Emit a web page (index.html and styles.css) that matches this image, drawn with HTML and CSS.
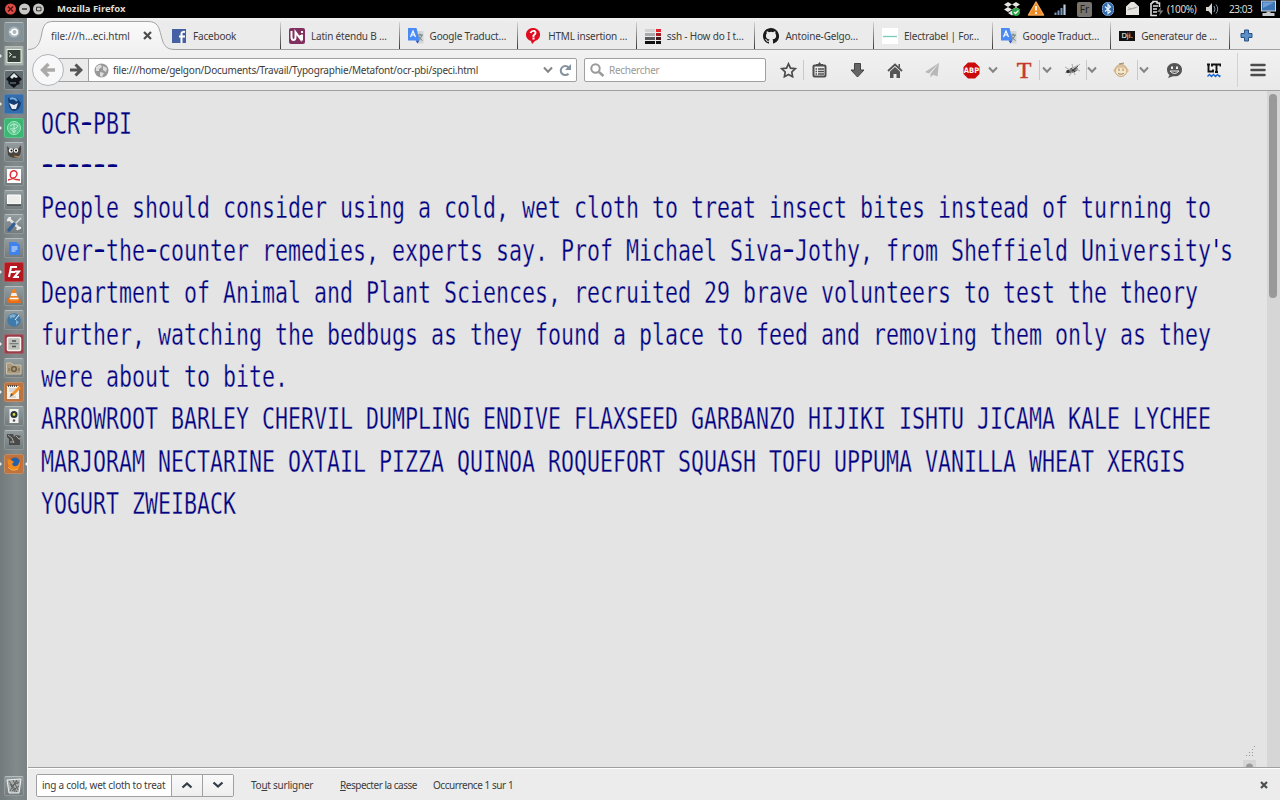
FILE: index.html
```html
<!DOCTYPE html>
<html lang="fr">
<head>
<meta charset="utf-8">
<title>Mozilla Firefox</title>
<link rel="stylesheet" href="styles.css">
</head>
<body>
<svg width="0" height="0" class="defs">
  <defs>
    <linearGradient id="tabfill" x1="0" y1="0" x2="0" y2="1"><stop offset="0" stop-color="#fbfbfb"/><stop offset="1" stop-color="#f1f1f1"/></linearGradient>
    <symbol id="chev" viewBox="0 0 10 8"><path d="M1 1.500 5 5.700 9 1.500" fill="none" stroke="#858585" stroke-width="2"/></symbol>
    <symbol id="translate" viewBox="0 0 16 16"><path d="M6 3h9.500v12.500H9z" fill="#d5d5d5"/><path d="M9 7h6M12 5.500v2M14 7q-1 4-4 5M10.500 8q1 3 4 4.500" stroke="#6f8080" fill="none"/><path d="M0 0h8.500l3 12.500H0z" fill="#4a8af4"/><path d="M7.500 12.500h4L9.500 15.500z" fill="#2a56c6"/><path d="M2.500 9 5 3l2.500 6M3.500 7h3" stroke="#fff" fill="none" stroke-width="1.200"/></symbol>
  </defs>
</svg>

<header class="panel">
  <div class="wm">
    <svg width="46" height="18" viewBox="0 0 46 18"><circle cx="10.500" cy="9" r="5.500" fill="#df4a44"/><path d="m8 6.500 5 5m0-5-5 5" stroke="#4b1110" stroke-width="1.300"/><circle cx="24.500" cy="9" r="5.500" fill="#c9c8c5"/><path d="M22 9h5" stroke="#333" stroke-width="1.500"/><circle cx="38.500" cy="9" r="5.500" fill="#c9c8c5"/><path d="M36.500 7.200h4.500v3.600h-4.500z" stroke="#333" fill="none"/></svg>
    <b class="wm-title">Mozilla Firefox</b>
  </div>
  <div class="tray">
    <svg width="18" height="18" viewBox="0 0 18 18"><path d="m5 2 4 2.500L5 7 1 4.500zM13 2l4 2.500L13 7 9 4.500zM5 7l4 2.500L5 12 1 9.500zM13 7l4 2.500-4 2.500-4-2.500zM5 13l4-2.500 4 2.500-4 2.500z" fill="#e5e5e3"/><circle cx="13" cy="12" r="4" fill="#22a744"/><path d="m11 12 1.500 1.500 3-3" stroke="#fff" fill="none" stroke-width="1.300"/></svg>
    <svg class="t-warn" width="18" height="18" viewBox="0 0 18 18"><path d="M9 2 16.500 15h-15z" fill="#f08a24" stroke="#f6a653" stroke-width="1.500" stroke-linejoin="round"/><path d="M9 6v4.500M9 12v2" stroke="#fff" stroke-width="1.800"/></svg>
    <svg class="t-net" width="14" height="18" viewBox="0 0 14 18"><path d="M1.500 15v-2.500M4.500 15v-4.500M7.500 15V8" stroke="#7895bb" stroke-width="2"/><path d="M10.500 15V4.500" stroke="#b9cce3" stroke-width="2.200"/></svg>
    <span class="kbd">Fr</span>
    <svg class="t-bt" width="12" height="18" viewBox="0 0 12 18"><rect x=".5" y="2.500" width="11" height="13" rx="5" fill="#2f68aa" stroke="#7aa3d2"/><path d="m3 6.500 5.500 5L6 13.500v-9L8.500 7 3 11.500" fill="none" stroke="#e7f1fb" stroke-width="1.200"/></svg>
    <svg class="t-mail" width="15" height="18" viewBox="0 0 15 18"><path d="M1 6.500 6 2h3l5 4.500V15H1z" fill="#e6e5e1"/><path d="m2.500 10 10-3M3 7.500 6 9l5-1.500" fill="none" stroke="#aaa"/></svg>
    <svg class="t-bat" width="15" height="18" viewBox="0 0 15 18"><path d="M4 3V1.500h4V3h2.500v4M2 3h2M2 3v12.500h6" fill="none" stroke="#ddd" stroke-width="1.600"/><path d="M4 6h5M4 9h4M4 12h4" stroke="#ddd" stroke-width="1.700"/><path d="m12 7-4 5h3l-1 4 4.500-5.500h-3z" fill="#777"/></svg>
    <span class="bat-label">(100%)</span>
    <svg class="t-vol" width="15" height="18" viewBox="0 0 15 18"><path d="M1 7h2.500L7 3v12l-3.500-4H1z" fill="#d6d5d1"/><path d="M9 6q2 3 0 6M11 4.500q3.500 4.500 0 9" stroke="#8298a5" fill="none"/></svg>
    <span class="clock">23:03</span>
    <svg class="t-pc" width="17" height="18" viewBox="0 0 17 18"><rect x="1.500" y="1" width="14" height="10" fill="#3f74b4" stroke="#cfd6dc"/><path d="M3 2.500h11L3 8z" fill="#6d9fd6"/><path d="M6.500 11.500h4V13h4v3H2.500v-3h4z" fill="#c6c9cc"/></svg>
  </div>
</header>

<div class="desktop">
  <nav class="dock">
    <i class="tile ubuntu"><svg viewBox="0 0 20 20"><circle cx="10" cy="10" r="5.500" fill="#a9b6bb"/><circle cx="10.500" cy="10" r="2.800" fill="none" stroke="#fff" stroke-width="1.500"/><circle cx="6.500" cy="10" r="1" fill="#fff"/></svg></i>
    <i class="tile run terminal"><svg viewBox="0 0 20 20"><rect x="3" y="3.500" width="14" height="13" fill="#353e38" stroke="#e8eee8"/><path d="m5 6.500 2.500 2L5 10.500M8.500 11H12" stroke="#fff" fill="none"/></svg></i>
    <i class="tile dark"><svg viewBox="0 0 20 20"><path d="m10 2 8 7-3 3 1 2-3 1-3 3-4-3-2-2 1-1-3-3z" fill="#101317"/><path d="m10 3 4 4-2 1-2-1-2 2-2-2z" fill="#dce7ee"/><path d="M6 13h6" stroke="#7e91a4"/></svg></i>
    <i class="tile run blue"><svg viewBox="0 0 20 20"><path d="M4 4q8-3 13 5-1 7-7 8-4-1-5-5z" fill="#153c72"/><path d="m5 9 5 2 4-2-2 6H8z" fill="#e6eaee"/><path d="M6 5q4-2 7 2" stroke="#75b2e4" stroke-width="2" fill="none"/></svg></i>
    <i class="tile run green"><svg viewBox="0 0 20 20"><circle cx="10" cy="10" r="6.500" fill="#5ec890" stroke="#a8e7c3"/><path d="M6 8q4-4 8 0-1 3-8 3M8 12l2 3 2-3M10 6v8" fill="none" stroke="#b9efcf"/></svg></i>
    <i class="tile"><svg viewBox="0 0 20 20"><path d="m3 4 3 3q5-1 8 0l3-4q1 9-3 12-7 2-10-2z" fill="#48443f"/><circle cx="7" cy="8.500" r="2.200" fill="#fff"/><circle cx="12" cy="8.500" r="2.200" fill="#fff"/><circle cx="7.500" cy="8.500" r="1"/><circle cx="12" cy="8.500" r="1"/><path d="m10 14 6 1" stroke="#c98b4b"/></svg></i>
    <i class="tile"><svg viewBox="0 0 20 20"><path d="M3 3h14v14H3z" fill="#fff"/><path d="M4 14q10-2 9-7-2-4-6-1-2 5 1 6 4 2 8 2" stroke="#de3038" stroke-width="1.500" fill="none"/></svg></i>
    <i class="tile"><svg viewBox="0 0 20 20"><path d="M3.500 5h13v9h-13z" fill="#ededeb" stroke="#fff"/><path d="M3 15h14" stroke="#44494a" stroke-width="1.500"/></svg></i>
    <i class="tile"><svg viewBox="0 0 20 20"><path d="m4 4 12 11" stroke="#e2e2df" stroke-width="2.500"/><path d="M3 6q3 1 3-3M13 16q1-3 4-2" stroke="#eee" stroke-width="2" fill="none"/><path d="m17 4-6 6" stroke="#ddd" stroke-width="1.500"/><path d="m10 10-5 6" stroke="#355f94" stroke-width="3.500" stroke-linecap="round"/></svg></i>
    <i class="tile"><svg viewBox="0 0 20 20"><path d="M5 4h7l4 3v10H5z" fill="#3f82ec"/><path d="M7.500 9h6M7.500 11h6M7.500 13h4" stroke="#e4efff"/></svg></i>
    <i class="tile run red"><svg viewBox="0 0 20 20"><path d="M5 15 7 5h6M6 10h5M11 9.500h4L10.500 15H15" fill="none" stroke="#fff" stroke-width="2"/></svg></i>
    <i class="tile"><svg viewBox="0 0 20 20"><path d="m4 12-1 5h14l-1-5z" fill="#e86b15"/><path d="M9 3h2l4 11q-5 3-10 0z" fill="#f58220"/><path d="M7.700 7h4.600l1 3H6.700z" fill="#f4eee9"/><path d="M5.800 12.500h8.600" stroke="#fff" stroke-width="1.500"/></svg></i>
    <i class="tile"><svg viewBox="0 0 20 20"><circle cx="10" cy="10" r="6.800" fill="#3f7aac"/><path d="M5 6q4-3 7-1l-2 3-2-1-1 2zM12 10l3 2-3 3z" fill="#86b1cd"/><path d="m15 5-4 5" stroke="#eee"/></svg></i>
    <i class="tile run wine"><svg viewBox="0 0 20 20"><rect x="3.500" y="3.500" width="13" height="13" rx="1" fill="#bfc0bb" stroke="#f5f5ee" stroke-width="1.500"/><path d="M5.500 9.700h9" stroke="#6c6f6d"/><path d="M8 7h4M8 12.500h4" stroke="#4e5251" stroke-width="1.700"/></svg></i>
    <i class="tile"><svg viewBox="0 0 20 20"><path d="M2.500 5h5l1.500 2h8v9H2.500z" fill="#a99a80" stroke="#cfc3aa"/><circle cx="10" cy="11" r="2.300" fill="none" stroke="#64543c" stroke-width="1.300"/><path d="M5 10v3M15 10v3" stroke="#75664c"/></svg></i>
    <i class="tile run orange"><svg viewBox="0 0 20 20"><path d="M3 4h12v13H3z" fill="#f4f2ed"/><path d="M4 4h10" stroke="#333" stroke-width="1.500" stroke-dasharray="1 1"/><path d="M5 7h7M5 9h5M5 15h7" stroke="#bbb"/><path d="m16 5-8 8" stroke="#ef922b" stroke-width="3"/><path d="m7 11 2 2-3 2z" fill="#5b432f"/></svg></i>
    <i class="tile"><svg viewBox="0 0 20 20"><rect x="5.500" y="3" width="9" height="14" fill="#f3f3f0"/><circle cx="10" cy="8.500" r="3.500" fill="#293435"/><circle cx="10" cy="8.500" r="1.400" fill="#d1d441"/><circle cx="10" cy="14.500" r="1.300" fill="#555"/><path d="M3.500 6v6M16.500 6v6" stroke="#7793a0"/></svg></i>
    <i class="tile"><svg viewBox="0 0 20 20"><path d="M3 4h6l1 3 2-2 5 1-3 3 2 1v5H5V9L3 7z" fill="#4a4b49"/><path d="m4 5 4 3 2 5M12 6l3 3M6 12h4" stroke="#aaa9a3" fill="none"/></svg></i>
    <i class="tile run active orange"><svg viewBox="0 0 20 20"><circle cx="10" cy="10" r="7" fill="#df6426"/><circle cx="11" cy="8.500" r="5" fill="#2462a7"/><path d="M3.500 5 7 6l3 2-2 2q2 4 6 1l2-4q1 9-6 9-7-1-6.500-11" fill="#f08a22"/><path d="M4 13q4 5 10 2" stroke="#f6bc3c" fill="none"/></svg></i>
    <i class="tile trash"><svg viewBox="0 0 20 20"><path d="m3 4 14-1-2 14H5z" fill="#a9adab" stroke="#eee"/><path d="m5 5 8 11M9 4l5 10M12 4l2 4M13 4 6 15M15 6l-8 4M15 10l-7 5M6 8l5 8" stroke="#5d6463"/></svg></i>
  </nav>

  <main class="browser">
    <div class="tabs">
      <div class="tab current">
        <svg class="tab-shape" width="150" height="32" viewBox="0 0 150 32"><path d="M0 32V31.500C10 31.500 12 24 13.500 17 15 8 17 3.500 25 3.500H120C130 3.500 131 10 133 17 135 26 137 31.500 147 31.500V32z" fill="url(#tabfill)"/><path d="M0 31.500C10 31.500 12 24 13.500 17 15 8 17 3.500 25 3.500H120C130 3.500 131 10 133 17 135 26 137 31.500 147 31.500" fill="none" stroke="#a5a5a5"/></svg>
        <span class="label w-cur">file:///h…eci.html</span>
        <svg class="x" width="9" height="9" viewBox="0 0 9 9"><path d="m1 1 7 7m0-7-7 7" stroke="#4c4c4c" stroke-width="2.200"/></svg>
      </div>
      <div class="tab fb"><svg class="fav" viewBox="0 0 16 16"><path d="M1 1h14v14H1z" fill="#4560a3"/><path d="M10.500 15V5.500q0-2 3.500-1.600M8 8.500h6" stroke="#fff" stroke-width="2" fill="none"/></svg><span class="label">Facebook</span></div>
      <div class="tab"><svg class="fav" viewBox="0 0 16 16"><rect width="16" height="16" rx="2" fill="#82305e"/><path d="M2.500 3v6q0 3 2 3t2-3V4l5 7V7M13 6.500v6M13 3v2" stroke="#fff" stroke-width="2" fill="none"/></svg><span class="label">Latin étendu B …</span></div>
      <div class="tab"><svg class="fav"><use href="#translate"/></svg><span class="label">Google Traduct…</span></div>
      <div class="tab"><svg class="fav" viewBox="0 0 16 16"><path d="M7 0a6.600 6.600 0 0 0-2 13l1 3 3-3A6.600 6.600 0 0 0 7 0" fill="#de0d20"/><path d="M4.500 5q1-2.500 4-2 2.500 2-1 4.500v1.500M6.500 10.500h2" stroke="#fff" stroke-width="1.900" fill="none"/></svg><span class="label">HTML insertion …</span></div>
      <div class="tab"><svg class="fav" viewBox="0 0 16 16"><path d="M0 1h10v3H0z" fill="#d2d2d2"/><path d="M0 5h10v3H0z" fill="#a9aaac"/><path d="M0 9h10v3H0z" fill="#57585a"/><path d="M0 13h10v3H0zM11 13h5v3h-5z" fill="#111"/><path d="M11 1h5v3h-5z" fill="#e9222b"/><path d="M11 5h5v3h-5z" fill="#a61b20"/><path d="M11 9h5v3h-5z" fill="#401619"/></svg><span class="label">ssh - How do I t…</span></div>
      <div class="tab"><svg class="fav" viewBox="0 0 16 16"><path fill="#1a1a1a" d="M8 0C3.580 0 0 3.580 0 8c0 3.540 2.290 6.530 5.470 7.590.4.070.55-.17.55-.38v-1.490c-2.010.37-2.530-.49-2.690-.94-.09-.23-.48-.94-.82-1.130-.28-.15-.68-.52-.01-.53.63-.01 1.080.58 1.230.82.72 1.210 1.870.87 2.330.66.070-.52.28-.87.51-1.070-1.780-.2-3.640-.89-3.640-3.950 0-.87.31-1.590.82-2.150-.08-.2-.36-1.020.08-2.120 0 0 .67-.21 2.200.82a7.600 7.600 0 0 1 4 0c1.530-1.040 2.200-.82 2.200-.82.44 1.100.16 1.920.08 2.120.51.56.82 1.270.82 2.150 0 3.070-1.870 3.750-3.650 3.950.29.25.54.73.54 1.480v2.200c0 .21.15.46.55.38A8 8 0 0 0 8 0"/></svg><span class="label">Antoine-Gelgo…</span></div>
      <div class="tab"><svg class="fav" viewBox="0 0 16 16"><path d="M0 0h16v16H0z" fill="#fff"/><path d="M1 8.500h14" stroke="#79c9bd" stroke-width="1.300"/></svg><span class="label">Electrabel | For…</span></div>
      <div class="tab"><svg class="fav"><use href="#translate"/></svg><span class="label">Google Traduct…</span></div>
      <div class="tab"><span class="fav dji">Dji.</span><span class="label">Generateur de …</span></div>
      <div class="tab plus"><svg width="13" height="13" viewBox="0 0 13 13"><path d="M4.500 1h4v3.500H12v4H8.500V12h-4V8.500H1v-4h3.500z" fill="#5d8fc7" stroke="#285286"/></svg></div>
    </div>

    <div class="toolbar">
      <svg class="back" width="32" height="34" viewBox="0 0 32 34"><circle cx="16" cy="17" r="15.500" fill="#f8f8f8" stroke="#aeb5bc"/><path d="M23 17H11M16.500 11 10.500 17l6 6" fill="none" stroke="#aaa" stroke-width="3.400"/></svg>
      <div class="urlbar">
        <div class="fwd"><svg width="14" height="14" viewBox="0 0 14 14"><path d="M1 7h10M6.500 1.500 12 7l-5.500 5.500" fill="none" stroke="#555" stroke-width="3"/></svg></div>
        <svg class="globe" width="15" height="15" viewBox="0 0 15 15"><circle cx="7.500" cy="7.500" r="7" fill="#999"/><path d="M2 4q3-3 5-2l1 2-3 2v2L2 8zM9 3l4 2-1 4-3-2zM6 9l4 1-2 4-2-1z" fill="#ddd"/></svg>
        <span class="url">file:///home/gelgon/Documents/Travail/Typographie/Metafont/ocr-pbi/speci.html</span>
        <svg class="drop" width="10" height="8"><use href="#chev"/></svg>
        <svg class="reload" width="13" height="13" viewBox="0 0 13 13"><path d="M9.500 9.700A4.500 4.500 0 1 1 9.500 3.500" fill="none" stroke="#8492a0" stroke-width="2"/><path d="M12 0v6H6z" fill="#8492a0"/></svg>
      </div>
      <div class="search"><svg width="15" height="15" viewBox="0 0 15 15"><circle cx="5.500" cy="5.500" r="4.200" fill="none" stroke="#999" stroke-width="2"/><path d="m9 9 4.500 4" stroke="#999" stroke-width="2.500"/></svg><span>Rechercher</span></div>
      <div class="actions">
        <span class="a a-star"><svg width="17" height="16" viewBox="0 0 17 16"><path d="m8.500 1.800 2 4.300 4.700.6-3.400 3.300.8 4.700-4.100-2.300-4.100 2.300.8-4.700L1.800 6.700l4.700-.6z" fill="none" stroke="#4d4d4d" stroke-width="1.700"/></svg></span>
        <span class="a a-clip"><svg width="15" height="16" viewBox="0 0 15 16"><rect x="1.500" y="3.500" width="12" height="11" rx="1" fill="none" stroke="#4d4d4d" stroke-width="2"/><path d="M4 4V2h2l1.500-2L9 2h2v2z" fill="#4d4d4d"/><path d="M3.500 7h1.500M6 7h6M3.500 9.500H5M6 9.500h6M3.500 12H5M6 12h6" stroke="#4d4d4d" stroke-width="1.300"/></svg></span>
        <span class="a a-wide"><svg width="15" height="15" viewBox="0 0 15 15"><path d="M4.500.5h6V7H14l-6.500 7L1 7h3.500z" fill="#666" stroke="#444"/></svg></span>
        <span class="a a-wide"><svg width="16" height="15" viewBox="0 0 16 15"><path d="m1 8 7-6.500L15 8" fill="none" stroke="#555" stroke-width="1.800"/><path d="m3 8.500 5-4.500 5 4.500V15H9.500v-4h-3v4H3zM11.500 1H13v4l-1.500-1z" fill="#555"/></svg></span>
        <span class="a a-plane"><svg width="15" height="16" viewBox="0 0 15 16"><path d="M14.500.5 0 10l4 1.500zM14 1 5.500 12v3.500L8 12.800l4.500 1.700z" fill="#b8b8b8"/></svg></span>
        <span class="a a-abp"><svg width="17" height="17" viewBox="0 0 17 17"><path d="M5 .5h7L16.500 5v7L12 16.500H5L.5 12V5z" fill="#cb0b0b"/><text x="8.500" y="11.300" text-anchor="middle" class="abp-text">ABP</text></svg></span>
        <span class="a a-c1"><svg width="10" height="8"><use href="#chev"/></svg></span>
        <span class="a a-t">T</span>
        <span class="a a-c2 sep"><svg width="10" height="8"><use href="#chev"/></svg></span>
        <span class="a a-fly"><svg width="17" height="14" viewBox="0 0 17 14"><ellipse cx="9" cy="7" rx="5" ry="2.700" fill="#777" transform="rotate(-20 9 7)"/><path d="m1 4 5 3M1 10l5-2M5 13l3-4M8 1l1 4M11 12l-1-3M16 1l-4 4M16 8l-4-2" stroke="#aaa"/><circle cx="4" cy="8.500" r="1.700" fill="#333"/><path d="m8 8 6-5M7 5l4 4" stroke="#333"/><path d="m8 6 6-4" stroke="#bbb" stroke-width="1.500"/></svg></span>
        <span class="a a-c3 sep"><svg width="10" height="8"><use href="#chev"/></svg></span>
        <span class="a a-monkey"><svg width="16" height="16" viewBox="0 0 16 16"><circle cx="2.200" cy="8.500" r="2" fill="#e8cda5"/><circle cx="13.800" cy="8.500" r="2" fill="#e8cda5"/><circle cx="8" cy="8.500" r="6" fill="#e0c49d" stroke="#c6a780"/><path d="M3 8q1-3 5-2 4-1 5 2v3q-5 6-10 0z" fill="#f7e5c8"/><path d="M6 6.500V9M10 6.500V9M5 11.500q3 1.500 6 0M6 2l5-1" stroke="#97866c" fill="none"/></svg></span>
        <span class="a a-c4 sep"><svg width="10" height="8"><use href="#chev"/></svg></span>
        <span class="a a-smile"><svg width="17" height="15" viewBox="0 0 17 15"><path d="M8.500 0C4 0 1 3 1 6.700c0 2.300 1 4 2.500 5.200L2 15l5-1.800C12.500 14 16 11 16 6.700 16 3 13 0 8.500 0" fill="#555"/><path d="M6 3.500v2.500M11 3.500v2.500" stroke="#eee" stroke-width="2"/><path d="M4 8h9q-4.500 5-9 0z" fill="none" stroke="#eee"/></svg></span>
        <span class="a a-lt"><svg width="14" height="15" viewBox="0 0 14 15"><path d="M0 1.500h3M1.500 1v7.500H6V6.500M5 3.500V1.500h8.500v2M9.500 1.500v7M8 9h3" fill="none" stroke="#111" stroke-width="1.900"/><path d="m.5 13.500 2-2 2 2 2-2 2 2 2-2 2 2 1-1" fill="none" stroke="#1762d0" stroke-width="1.300"/></svg></span>
        <span class="a a-menu"><svg width="16" height="14" viewBox="0 0 16 14"><path d="M1.500 2h13M1.500 7h13M1.500 12h13" stroke="#4b4b4b" stroke-width="2.500" stroke-linecap="round"/></svg></span>
      </div>
    </div>

    <section class="page">
      <pre class="specimen">OCR<span class="hy">-</span>PBI
<span class="hy">------</span>
People should consider using a cold, wet cloth to treat insect bites instead of turning to
over<span class="hy">-</span>the<span class="hy">-</span>counter remedies, experts say. Prof Michael Siva<span class="hy">-</span>Jothy, from Sheffield University<span class="apos">'</span>s
Department of Animal and Plant Sciences, recruited 29 brave volunteers to test the theory
further, watching the bedbugs as they found a place to feed and removing them only as they
were about to bite.
ARROWROOT BARLEY CHERVIL DUMPLING ENDIVE FLAXSEED GARBANZO HIJIKI ISHTU JICAMA KALE LYCHEE
MARJORAM NECTARINE OXTAIL PIZZA QUINOA ROQUEFORT SQUASH TOFU UPPUMA VANILLA WHEAT XERGIS
YOGURT ZWEIBACK</pre>
      <div class="scroll"><div class="thumb"></div></div>
      <svg class="grip" width="13" height="22" viewBox="0 0 13 22"><path d="M0 14h13v8H0z" fill="#d6d6d6"/><path d="M3 21a3.500 3.500 0 0 1 7 0z" fill="#999"/><path d="M3 9.500h9M6 6.500h6M9 3.500h3M11 .5h1" stroke="#999" stroke-dasharray="1 2"/></svg>
    </section>

    <footer class="findbar">
      <div class="find"><div class="find-in"><span>ing a cold, wet cloth to treat</span></div><div class="find-btn"><svg width="12" height="8" viewBox="0 0 12 8"><path d="m1.500 6.500 4.500-4 4.500 4" fill="none" stroke="#333d48" stroke-width="2.300"/></svg></div><div class="find-btn"><svg width="12" height="8" viewBox="0 0 12 8"><path d="M1.500 1.500 6 5.500l4.500-4" fill="none" stroke="#333d48" stroke-width="2.300"/></svg></div></div>
      <span class="f1">To<u>u</u>t surligner</span><span class="f2"><u>R</u>especter la casse</span><span class="f3">Occurrence 1 sur 1</span>
      <svg class="fx" width="8" height="8" viewBox="0 0 8 8"><path d="m1 1 6 6m0-6L1 7" stroke="#4a4f50" stroke-width="2.200"/></svg>
    </footer>
  </main>
</div>
</body>
</html>
```
FILE: styles.css
```css
* { box-sizing: border-box; }
body { margin: 0; width: 1280px; height: 800px; overflow: hidden; background: #000; font: 10px/14px "Noto Sans", "Open Sans", sans-serif; color: #3c3c3c; }
svg { display: block; flex: none; }
.defs { position: absolute; }
span, b { white-space: nowrap; }

.panel { height: 18px; display: flex; justify-content: space-between; color: #dfdbd2; }
.wm, .tray { display: flex; align-items: center; }
.wm-title { margin-left: 11px; font-size: 9.5px; letter-spacing: -0.03px; }
.tray { padding-right: 3px; }
.t-warn { margin-left: 6px; }
.t-net { margin-left: 9px; }
.kbd { width: 15px; height: 15px; margin-left: 9px; background: #77746f; color: #1f1e1c; border-radius: 2px; text-align: center; line-height: 15px; }
.t-bt { margin-left: 10px; }
.t-mail { margin-left: 11px; }
.t-bat { margin-left: 9px; }
.bat-label { width: 31px; margin-left: 3px; letter-spacing: -0.35px; }
.t-vol { margin-left: 7px; }
.clock { width: 24px; margin-left: 9px; letter-spacing: -0.45px; }
.t-pc { margin-left: 7px; }

.desktop { display: flex; height: 782px; }
.dock { width: 28px; background: linear-gradient(90deg, #737a7b, #838a8b 60%, #7b8283); border-right: 1px solid #f7f7f7; padding: 4px 0 4px 4px; display: flex; flex-direction: column; gap: 4px; }
.tile { position: relative; width: 20px; height: 20px; flex: none; border-radius: 2px; background: linear-gradient(#929b9e, #747c7e); border: 1px solid #909799; border-top-color: #b5bcbe; }
.tile svg { width: 20px; height: 20px; margin: -1px; }
.ubuntu { background: #84939a; }
.terminal { background: #a8b2a9; }
.dark { background: #606a71; }
.blue { background: #346dac; border-color: #4d7fb5; }
.green { background: #39b773; border-color: #5cc48c; }
.red { background: #b3191f; border-color: #c04a4e; }
.wine { background: #993f4c; border-color: #a65c67; }
.orange { background: #bd7440; border-color: #c48a60; }
.run::before { content: ""; position: absolute; left: -5px; top: 7px; border: 2px solid transparent; border-left-color: #e8e8e8; border-right: 0; }
.active::after { content: ""; position: absolute; right: -4px; top: 7px; border: 2px solid transparent; border-right-color: #eee; border-left: 0; }
.trash { margin-top: auto; }

.browser { width: 1252px; display: flex; flex-direction: column; }
.tabs { height: 32px; display: flex; background: linear-gradient(#f1f1f1, #ebebeb 15%, #ebebeb); border-bottom: 1px solid #a0a0a0; }
.tab { position: relative; width: 118.600px; flex: none; display: flex; align-items: center; padding: 4px 0 0 9px; }
.tab:not(.current):not(.fb)::before { content: ""; position: absolute; left: 0; top: 4px; width: 1px; height: 27px; background: linear-gradient(#d5d5d5, #393632); }
.fav { width: 16px; height: 16px; margin-right: 6px; flex: none; }
.dji { background: #111; color: #fff; font: 7px/10px "DejaVu Sans", sans-serif; height: 10px; text-align: center; }
.current { width: 134px; padding-left: 23px; justify-content: space-between; padding-right: 10px; }
.current .label, .current .x { position: relative; }
.tab-shape { position: absolute; left: 0; top: 0; z-index: 0; }
.fb { z-index: 1; width: 118px; padding-left: 9px; }
.label { letter-spacing: -0.2px; }
.w-cur { letter-spacing: -0.04px; }
.plus { width: 51px; padding-left: 11px; }

.toolbar { height: 41px; display: flex; align-items: center; background: linear-gradient(#f1f1f1, #e9e9e9); border-bottom: 1px solid #a0a0a0; }
.back { position: relative; z-index: 1; margin-left: 4px; }
.urlbar { width: 521px; height: 24px; flex: none; margin-left: -8px; display: flex; align-items: center; background: #fff; border: 1px solid #a0a0a0; border-radius: 0 2px 2px 0; }
.fwd { width: 32px; height: 22px; background: #ebebeb; border-right: 1px solid #a0a0a0; display: flex; align-items: center; padding-left: 12px; }
.globe { margin-left: 5px; }
.url { width: 372px; margin-left: 4px; letter-spacing: -0.22px; }
.drop { margin: 0 0 0 58px; }
.reload { margin-left: 6px; }
.search { width: 182px; height: 24px; flex: none; margin-left: 7px; padding-left: 5px; display: flex; align-items: center; gap: 4px; background: #fff; border: 1px solid #a0a0a0; border-radius: 2px; color: #999; letter-spacing: -0.28px; }
.actions { display: flex; align-items: center; height: 40px; margin-left: 10px; flex: none; }
.a { height: 20px; display: flex; align-items: center; justify-content: center; flex: none; }
.a-star { width: 24px; }
.a-clip { width: 38px; background: linear-gradient(#c9c9c9, #c9c9c9) 3px 0 / 1px 20px no-repeat; }
.a-wide { width: 38px; }
.a-plane { width: 37px; }
.a-abp { width: 26px; margin-left: 7px; }
.abp-text { font: bold 7.500px "DejaVu Sans Condensed", sans-serif; fill: #fff; }
.a-c1 { width: 18px; }
.a-t { width: 30px; margin-left: 7px; font: 24px/20px "Liberation Serif", serif; color: #c43a2c; -webkit-text-stroke: 0.5px #c43a2c; }
.sep { border-left: 1px solid #c9c9c9; }
.a-c2 { width: 14px; }
.a-fly { width: 28px; margin-left: 5px; }
.a-c3 { width: 11px; }
.a-monkey { width: 32px; margin-left: 8px; }
.a-c4 { width: 12px; }
.a-smile { width: 36px; margin-left: 7px; }
.a-lt { width: 40px; margin-left: 2px; }
.a-menu { width: 42px; height: 34px; margin-left: 3px; border-left: 1px solid #d2d2d2; padding-right: 1px; }

.page { position: relative; height: 676px; background: #e4e4e4; overflow: hidden; display: flex; }
.specimen { margin: 12px 0 0 13px; width: 1226px; height: 430px; flex: none; font: 30px/42.200px "DejaVu Sans Mono", monospace; color: #000080; -webkit-text-stroke: 0.3px #e4e4e4; transform: scaleX(0.7198); transform-origin: 0 0; }
.hy { line-height: 1; vertical-align: 2px; -webkit-text-stroke: 0; text-shadow: 2.500px 0 #000080, -2.500px 0 #000080; }
.apos { letter-spacing: -5.500px; margin-left: -2px; margin-right: 2px; -webkit-text-stroke: 0; }
.scroll { width: 13px; background: #d6d6d6; padding: 3px 2px; }
.thumb { width: 8px; height: 204px; border-radius: 4px; background: #999; }
.grip { position: absolute; left: 1215px; top: 655px; }

.findbar { height: 33px; display: flex; align-items: center; background: #ececec; border-top: 1px solid #a0a0a0; box-shadow: inset 0 1px #fff; padding: 2px 12px 0 8px; letter-spacing: -0.25px; }
.find { width: 198px; height: 23px; display: flex; border: 1px solid #a0a0a0; border-radius: 2px; overflow: hidden; flex: none; }
.find-in { width: 134px; background: #fff; padding-left: 5px; line-height: 21px; overflow: hidden; }
.find-btn { width: 31px; background: linear-gradient(#fafafa, #eee); border-left: 1px solid #a0a0a0; display: flex; align-items: center; justify-content: center; }
.f1 { width: 89px; margin-left: 17px; padding-bottom: 1px; }
.f2 { width: 93px; padding-bottom: 1px; letter-spacing: -0.48px; }
.f3 { padding-bottom: 1px; letter-spacing: -0.45px; }
.fx { margin-left: auto; }
```
